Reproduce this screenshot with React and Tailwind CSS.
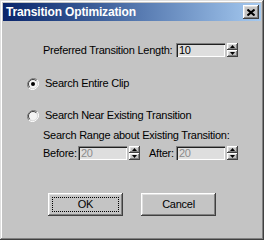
const raised =
  "shadow-[inset_-1px_-1px_#404040,inset_1px_1px_#ffffff,inset_-2px_-2px_#808080,inset_2px_2px_#dfdfdf]";

const Spinner = ({ className = "" }) => (
  <div className={`flex flex-col w-[11px] h-[14px] ${className}`}>
    <div className={`h-[7px] flex items-center justify-center bg-[#c4c4c4] ${raised}`}>
      <svg width="5" height="3" viewBox="0 0 5 3">
        <path d="M2.5 0L5 3H0z" fill="#000" />
      </svg>
    </div>
    <div className={`h-[7px] flex items-center justify-center bg-[#c4c4c4] ${raised}`}>
      <svg width="5" height="3" viewBox="0 0 5 3">
        <path d="M0 0H5L2.5 3z" fill="#000" />
      </svg>
    </div>
  </div>
);

const Field = ({ value, disabled }) => (
  <div
    className={`w-[49px] h-[14px] bg-[#dedede] pl-[3px] text-[11px] leading-[14px] shadow-[inset_1px_1px_#808080,inset_2px_2px_#202020,inset_-1px_-1px_#ffffff,inset_-2px_-2px_#dfdfdf] ${
      disabled ? "text-[#8c8c8c]" : "text-black"
    }`}
  >
    {value}
  </div>
);

const Radio = ({ checked }) => (
  <svg width="12" height="12" viewBox="0 0 12 12">
    <path d="M10.2 1.8A6 6 0 0 0 1.8 10.2" fill="none" stroke="#808080" strokeWidth="1" />
    <path d="M1.8 10.2A6 6 0 0 0 10.2 1.8" fill="none" stroke="#ffffff" strokeWidth="1" />
    <circle cx="6" cy="6" r="4.5" fill="#f4f4f4" />
    <path d="M9.2 2.8A4.5 4.5 0 0 0 2.8 9.2" fill="none" stroke="#404040" strokeWidth="1" />
    <path d="M2.8 9.2A4.5 4.5 0 0 0 9.2 2.8" fill="none" stroke="#dfdfdf" strokeWidth="1" />
    {checked && <circle cx="6" cy="6" r="2" fill="#000" />}
  </svg>
);

export default function App() {
  return (
    <div className="w-[264px] h-[240px] bg-[#c4c4c4] p-[3px] flex flex-col font-['Liberation_Sans',Arial,sans-serif] text-[11px] leading-[13px] tracking-[-0.25px] text-black shadow-[inset_-1px_-1px_#404040,inset_1px_1px_#dfdfdf,inset_-2px_-2px_#808080,inset_2px_2px_#ffffff]">
      {/* Title bar */}
      <div className="h-[18px] flex items-center justify-between bg-linear-to-r from-[#0a246a] to-[#a6caf0] pl-[3px] pr-[2px]">
        <span className="text-white font-bold text-[12px] tracking-[-0.15px]">Transition Optimization</span>
        <div className={`w-[16px] h-[14px] flex items-center justify-center bg-[#c4c4c4] ${raised}`}>
          <svg width="8" height="7" viewBox="0 0 8 7">
            <path d="M0.5 0.5L7.5 6.5M7.5 0.5L0.5 6.5" stroke="#000" strokeWidth="2" />
          </svg>
        </div>
      </div>

      {/* Preferred length */}
      <div className="flex items-center h-[14px] mt-[22px] pl-[40px]">
        <span className="w-[133px]">Preferred Transition Length:</span>
        <Field value="10" />
        <Spinner className="ml-[2px]" />
      </div>

      {/* Radios */}
      <div className="flex items-center h-[13px] mt-[20px] pl-[24px] gap-[6px]">
        <Radio checked />
        <span>Search Entire Clip</span>
      </div>
      <div className="flex items-center h-[13px] mt-[19px] pl-[24px] gap-[6px]">
        <Radio />
        <span>Search Near Existing Transition</span>
      </div>

      <div className="mt-[7px] pl-[40px]">Search Range about Existing Transition:</div>

      <div className="flex items-center h-[14px] mt-[4px] pl-[40px]">
        <span className="w-[35px]">Before:</span>
        <Field value="20" disabled />
        <Spinner className="ml-[2px]" />
        <span className="w-[27px] ml-[9px]">After:</span>
        <Field value="20" disabled />
        <Spinner className="ml-[2px]" />
      </div>

      {/* Buttons */}
      <div className="flex justify-center gap-[18px] mt-[33px]">
        <button className={`relative w-[75px] h-[23px] bg-[#c4c4c4] ${raised}`}>
          <span className="absolute inset-[4px] border border-dotted border-black" />
          OK
        </button>
        <button className={`w-[75px] h-[23px] bg-[#c4c4c4] ${raised}`}>Cancel</button>
      </div>
    </div>
  );
}
